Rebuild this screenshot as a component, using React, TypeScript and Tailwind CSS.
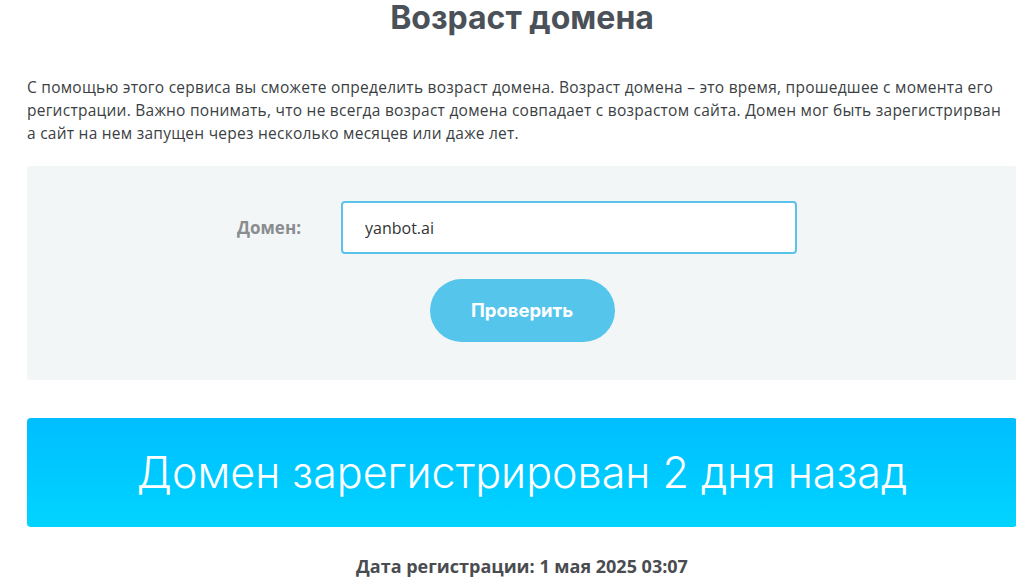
import React, { useState } from 'react';

const App: React.FC = () => {
  const [domain, setDomain] = useState<string>('yanbot.ai');

  return (
    <div className="min-h-screen bg-white pt-[2px]">
      <div className="ml-[27px] w-[990px] font-['Open_Sans','Lato',sans-serif] text-[#3c4045]">
        <h1 className="-mt-[1px] text-center text-[32px] font-bold leading-[34px] text-[#4b5159] font-['Inter','Noto_Sans',sans-serif]">
          Возраст домена
        </h1>

        <p className="mt-[41px] text-[15.5px] leading-[23px] tracking-[0.25px] text-[#3b3f44]">
          С помощью этого сервиса вы сможете определить возраст домена. Возраст домена – это время, прошедшее с момента его
          <br />
          регистрации. Важно понимать, что не всегда возраст домена совпадает с возрастом сайта. Домен мог быть зарегистрирван
          <br />
          а сайт на нем запущен через несколько месяцев или даже лет.
        </p>

        <div className="mt-[21px] h-[214px] rounded-[3px] bg-[#f3f6f7] pt-[35px]">
          <div className="flex items-center">
            <label className="w-[314px] pr-[40px] text-right text-[17px] font-bold text-[#8a8d90]">Домен:</label>
            <input
              value={domain}
              onChange={(e) => setDomain(e.target.value)}
              className="h-[53px] w-[456px] rounded-[4px] border-2 border-[#5bc2ea] bg-white px-[22px] text-[16px] text-[#333] outline-none"
            />
          </div>
          <div className="mt-[25px] flex justify-center">
            <button className="h-[63px] w-[185px] rounded-full bg-[#56c5ec] text-[18.5px] font-bold text-white font-['Inter','Noto_Sans',sans-serif]">
              Проверить
            </button>
          </div>
        </div>

        <div className="mt-[38px] flex h-[109px] items-center justify-center rounded-[4px] bg-gradient-to-b from-[#00beff] to-[#00d4ff]">
          <span className="text-[43px] font-light text-white font-['Inter','Noto_Sans',sans-serif]">
            Домен зарегистрирован 2 дня назад
          </span>
        </div>

        <div className="mt-[26px] text-center text-[18px] font-bold text-[#4a4c50]">
          Дата регистрации: 1 мая 2025 03:07
        </div>
      </div>
    </div>
  );
};

export default App;
